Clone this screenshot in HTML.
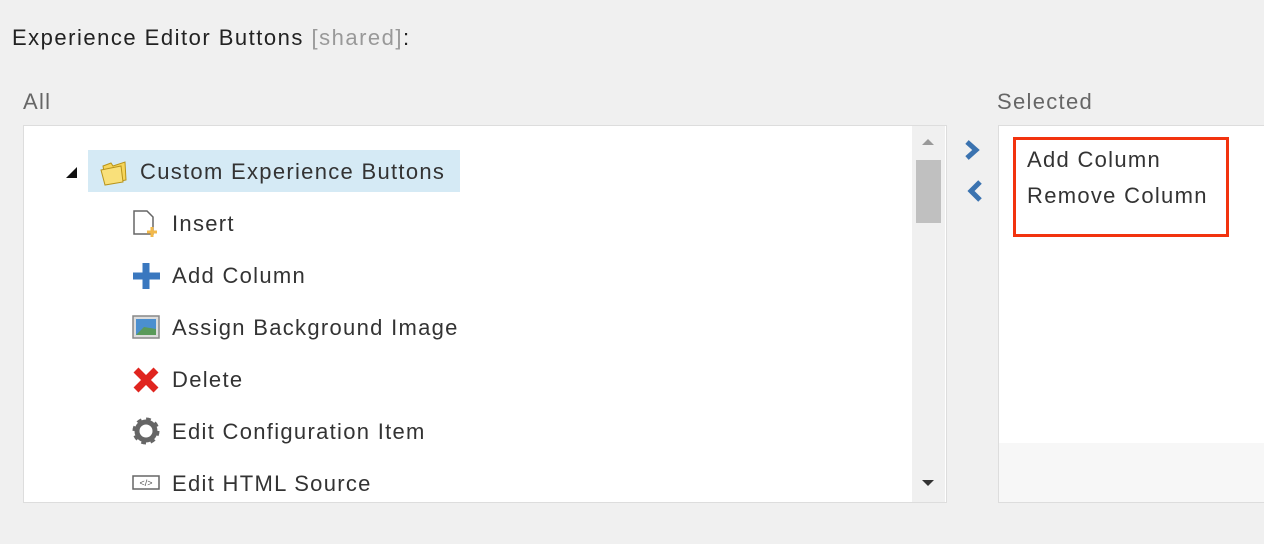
<!DOCTYPE html><html><head><style>
body{margin:0;width:1264px;height:544px;background:#f0f0f0;font-family:"Liberation Sans",sans-serif;color:#333;font-size:22px;letter-spacing:1.3px;position:relative;overflow:hidden}
.a{position:absolute;white-space:nowrap}
.t{line-height:30px}
</style></head><body>
<div class="a t" style="left:12px;top:23px;color:#222;letter-spacing:1.5px">Experience Editor Buttons <span style="color:#999">[shared]</span>:</div>
<div class="a t" style="left:23px;top:87px;color:#666">All</div>
<div class="a t" style="left:997px;top:87px;color:#666">Selected</div>
<div class="a" style="left:23px;top:125px;width:922px;height:376px;background:#fff;border:1px solid #ddd"></div>
<div class="a" style="left:912px;top:126px;width:33px;height:376px;background:#f0f0f0"></div>
<div class="a" style="left:916px;top:160px;width:25px;height:63px;background:#c0c0c0"></div>
<div class="a" style="left:922px;top:139px;width:0;height:0;border:6px solid transparent;border-bottom:6px solid #999;border-top:0"></div>
<div class="a" style="left:922px;top:480px;width:0;height:0;border:6px solid transparent;border-top:6px solid #333;border-bottom:0"></div>
<svg class="a" style="left:962px;top:138px" width="26" height="70"><path d="M5 4 L14 12 L5 20" stroke="#3b73b0" stroke-width="5" fill="none"/><path d="M18 44 L9 53 L18 62" stroke="#3b73b0" stroke-width="5" fill="none"/></svg>
<div class="a" style="left:998px;top:125px;width:270px;height:376px;background:#f7f7f7;border:1px solid #ddd"></div>
<div class="a" style="left:999px;top:126px;width:270px;height:317px;background:#fff"></div>
<div class="a" style="left:1013px;top:137px;width:210px;height:94px;border:3px solid #f2330f"></div>
<div class="a t" style="left:1027px;top:145px">Add Column</div>
<div class="a t" style="left:1027px;top:181px">Remove Column</div>
<div class="a" style="left:66px;top:167px;width:0;height:0;border-left:11px solid transparent;border-bottom:11px solid #111"></div>
<div class="a" style="left:88px;top:150px;width:372px;height:42px;background:#d5eaf5"></div>
<svg class="a" style="left:99px;top:158px" width="30" height="28"><path d="M4 8 L12 5 L14 8 L26 4 L27 22 L7 26 Z" fill="#f6d55a" stroke="#b8941a"/><path d="M2 12 L22 8 L24 24 L6 27 Z" fill="#f9e07a" stroke="#b8941a"/></svg>
<div class="a t" style="left:140px;top:157px">Custom Experience Buttons</div>
<svg class="a" style="left:132px;top:209px" width="30" height="30"><path d="M2 2 H15 L21 8 V25 H2 Z" fill="#fff" stroke="#666" stroke-width="1.5"/><path d="M20 18 V28 M15 23 H25" stroke="#f2b84a" stroke-width="3"/></svg>
<div class="a t" style="left:172px;top:209px">Insert</div>
<svg class="a" style="left:132px;top:261px" width="30" height="30"><path d="M14 2 V28 M1 15 H28" stroke="#3a78bf" stroke-width="7"/></svg>
<div class="a t" style="left:172px;top:261px">Add Column</div>
<svg class="a" style="left:132px;top:315px" width="30" height="26"><rect x="1" y="1" width="26" height="22" fill="#ddd" stroke="#888" stroke-width="1.5"/><rect x="4" y="4" width="20" height="16" fill="#4b8fcf"/><path d="M4 20 L12 12 L24 14 V20 Z" fill="#5a9a5a"/></svg>
<div class="a t" style="left:172px;top:313px">Assign Background Image</div>
<svg class="a" style="left:132px;top:366px" width="30" height="28"><path d="M4 4 L24 24 M24 4 L4 24" stroke="#e0251f" stroke-width="7"/></svg>
<div class="a t" style="left:172px;top:365px">Delete</div>
<svg class="a" style="left:132px;top:417px" width="30" height="30"><circle cx="14" cy="14" r="9" fill="none" stroke="#666" stroke-width="5"/><circle cx="14" cy="14" r="11" fill="none" stroke="#666" stroke-width="5" stroke-dasharray="4.3 4.3"/></svg>
<div class="a t" style="left:172px;top:417px">Edit Configuration Item</div>
<svg class="a" style="left:132px;top:475px" width="30" height="16"><rect x="1" y="1" width="26" height="13" fill="#fff" stroke="#666" stroke-width="1.5"/><text x="14" y="11" font-size="9" text-anchor="middle" fill="#555" font-family="Liberation Sans" letter-spacing="0">&lt;/&gt;</text></svg>
<div class="a t" style="left:172px;top:469px">Edit HTML Source</div>
</body></html>
